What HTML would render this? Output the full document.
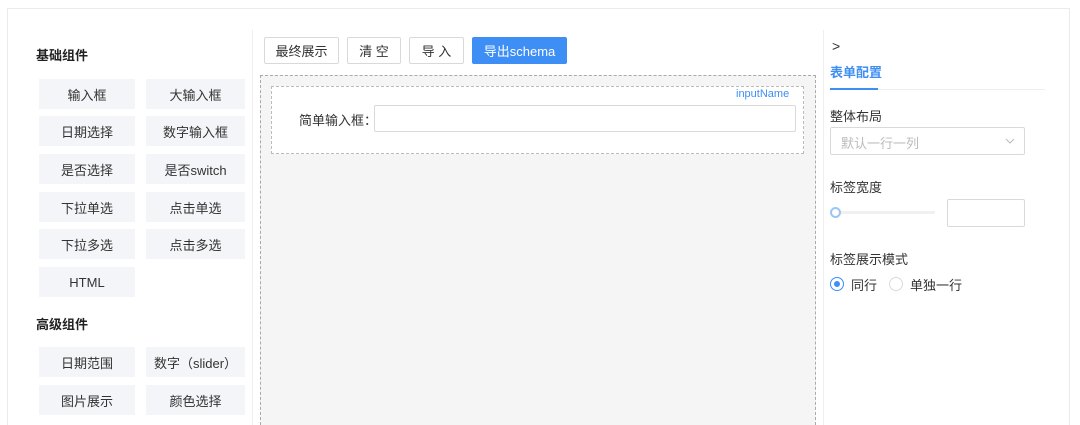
<!DOCTYPE html>
<html><head><meta charset="utf-8"><style>
*{box-sizing:border-box;margin:0;padding:0}
html,body{width:1080px;height:425px;overflow:hidden}
body{background:#fff;font-family:"Liberation Sans","Noto Sans CJK SC",sans-serif;font-size:13px;color:#333;position:relative}
.abs{position:absolute}
.card{left:7px;top:8px;width:1063px;height:417px;border:1px solid #ebebeb;border-bottom:none}
.title{font-weight:bold;font-size:13px;color:#222}
.cb{position:absolute;background:#f4f5f8;height:30px;display:flex;align-items:center;justify-content:center;font-size:13px;color:#333}
.btn{position:absolute;top:37px;height:27px;border:1px solid #d9d9d9;border-radius:2px;display:flex;align-items:center;justify-content:center;font-size:13px;color:#333;background:#fff}
.lbl{font-size:13px;color:#333}
</style></head><body>
<div class="abs card"></div>
<div class="abs" style="left:252px;top:30px;width:1px;height:395px;background:#eee"></div>
<div class="abs" style="left:823px;top:30px;width:1px;height:395px;background:#eee"></div>

<div class="abs title" style="left:36px;top:45px">基础组件</div>
<div class="cb" style="left:39px;top:79px;width:96px">输入框</div>
<div class="cb" style="left:146px;top:79px;width:99px">大输入框</div>
<div class="cb" style="left:39px;top:116px;width:96px">日期选择</div>
<div class="cb" style="left:146px;top:116px;width:99px">数字输入框</div>
<div class="cb" style="left:39px;top:154px;width:96px">是否选择</div>
<div class="cb" style="left:146px;top:154px;width:99px">是否switch</div>
<div class="cb" style="left:39px;top:192px;width:96px">下拉单选</div>
<div class="cb" style="left:146px;top:192px;width:99px">点击单选</div>
<div class="cb" style="left:39px;top:229px;width:96px">下拉多选</div>
<div class="cb" style="left:146px;top:229px;width:99px">点击多选</div>
<div class="cb" style="left:39px;top:267px;width:96px">HTML</div>
<div class="abs title" style="left:36px;top:314px">高级组件</div>
<div class="cb" style="left:39px;top:347px;width:96px">日期范围</div>
<div class="cb" style="left:146px;top:347px;width:99px">数字（slider）</div>
<div class="cb" style="left:39px;top:385px;width:96px">图片展示</div>
<div class="cb" style="left:146px;top:385px;width:99px">颜色选择</div>

<div class="btn" style="left:264px;width:75px">最终展示</div>
<div class="btn" style="left:347px;width:54px">清 空</div>
<div class="btn" style="left:409px;width:55px">导 入</div>
<div class="btn" style="left:472px;width:95px;background:#3d8ef5;border-color:#3d8ef5;color:#fff">导出schema</div>

<div class="abs" style="left:260px;top:75px;width:556px;height:350px;border:1px dashed #aaa;border-bottom:none;background:#f5f5f5"></div>
<div class="abs" style="left:271px;top:86px;width:533px;height:68px;border:1px dashed #bbb;background:#fff"></div>
<div class="abs" style="left:736px;top:88px;font-size:11px;color:#3d8ef5">inputName</div>
<div class="abs lbl" style="left:299px;top:110px">简单输入框：</div>
<div class="abs" style="left:374px;top:105px;width:422px;height:27px;border:1px solid #d9d9d9;border-radius:2px"></div>

<div class="abs" style="left:832px;top:38px;font-size:14px;color:#333">&gt;</div>
<div class="abs" style="left:830px;top:62px;color:#3d8ef5;font-weight:bold">表单配置</div>
<div class="abs" style="left:830px;top:89px;width:215px;height:1px;background:#eee"></div>
<div class="abs" style="left:830px;top:88px;width:48px;height:2px;background:#3d8ef5"></div>
<div class="abs lbl" style="left:830px;top:106px">整体布局</div>
<div class="abs" style="left:830px;top:127px;width:195px;height:28px;border:1px solid #d9d9d9;border-radius:2px;color:#bbb;padding:5px 0 0 10px">默认一行一列</div>
<svg class="abs" style="left:1005px;top:137px" width="10" height="8"><path d="M1 2 L5 6 L9 2" stroke="#bbb" fill="none"/></svg>
<div class="abs lbl" style="left:830px;top:177px">标签宽度</div>
<div class="abs" style="left:835px;top:211px;width:100px;height:3px;background:#f0f0f0;border-radius:2px"></div>
<div class="abs" style="left:830px;top:207px;width:11px;height:11px;border:2px solid #9cc5f7;border-radius:50%;background:#fff"></div>
<div class="abs" style="left:947px;top:199px;width:78px;height:28px;border:1px solid #d9d9d9;border-radius:2px"></div>
<div class="abs lbl" style="left:830px;top:249px">标签展示模式</div>
<div class="abs" style="left:830px;top:277px;width:14px;height:14px;border:1px solid #3d8ef5;border-radius:50%"></div>
<div class="abs" style="left:834px;top:281px;width:6px;height:6px;background:#3d8ef5;border-radius:50%"></div>
<div class="abs lbl" style="left:851px;top:275px">同行</div>
<div class="abs" style="left:889px;top:277px;width:14px;height:14px;border:1px solid #d9d9d9;border-radius:50%"></div>
<div class="abs lbl" style="left:910px;top:275px">单独一行</div>
</body></html>
